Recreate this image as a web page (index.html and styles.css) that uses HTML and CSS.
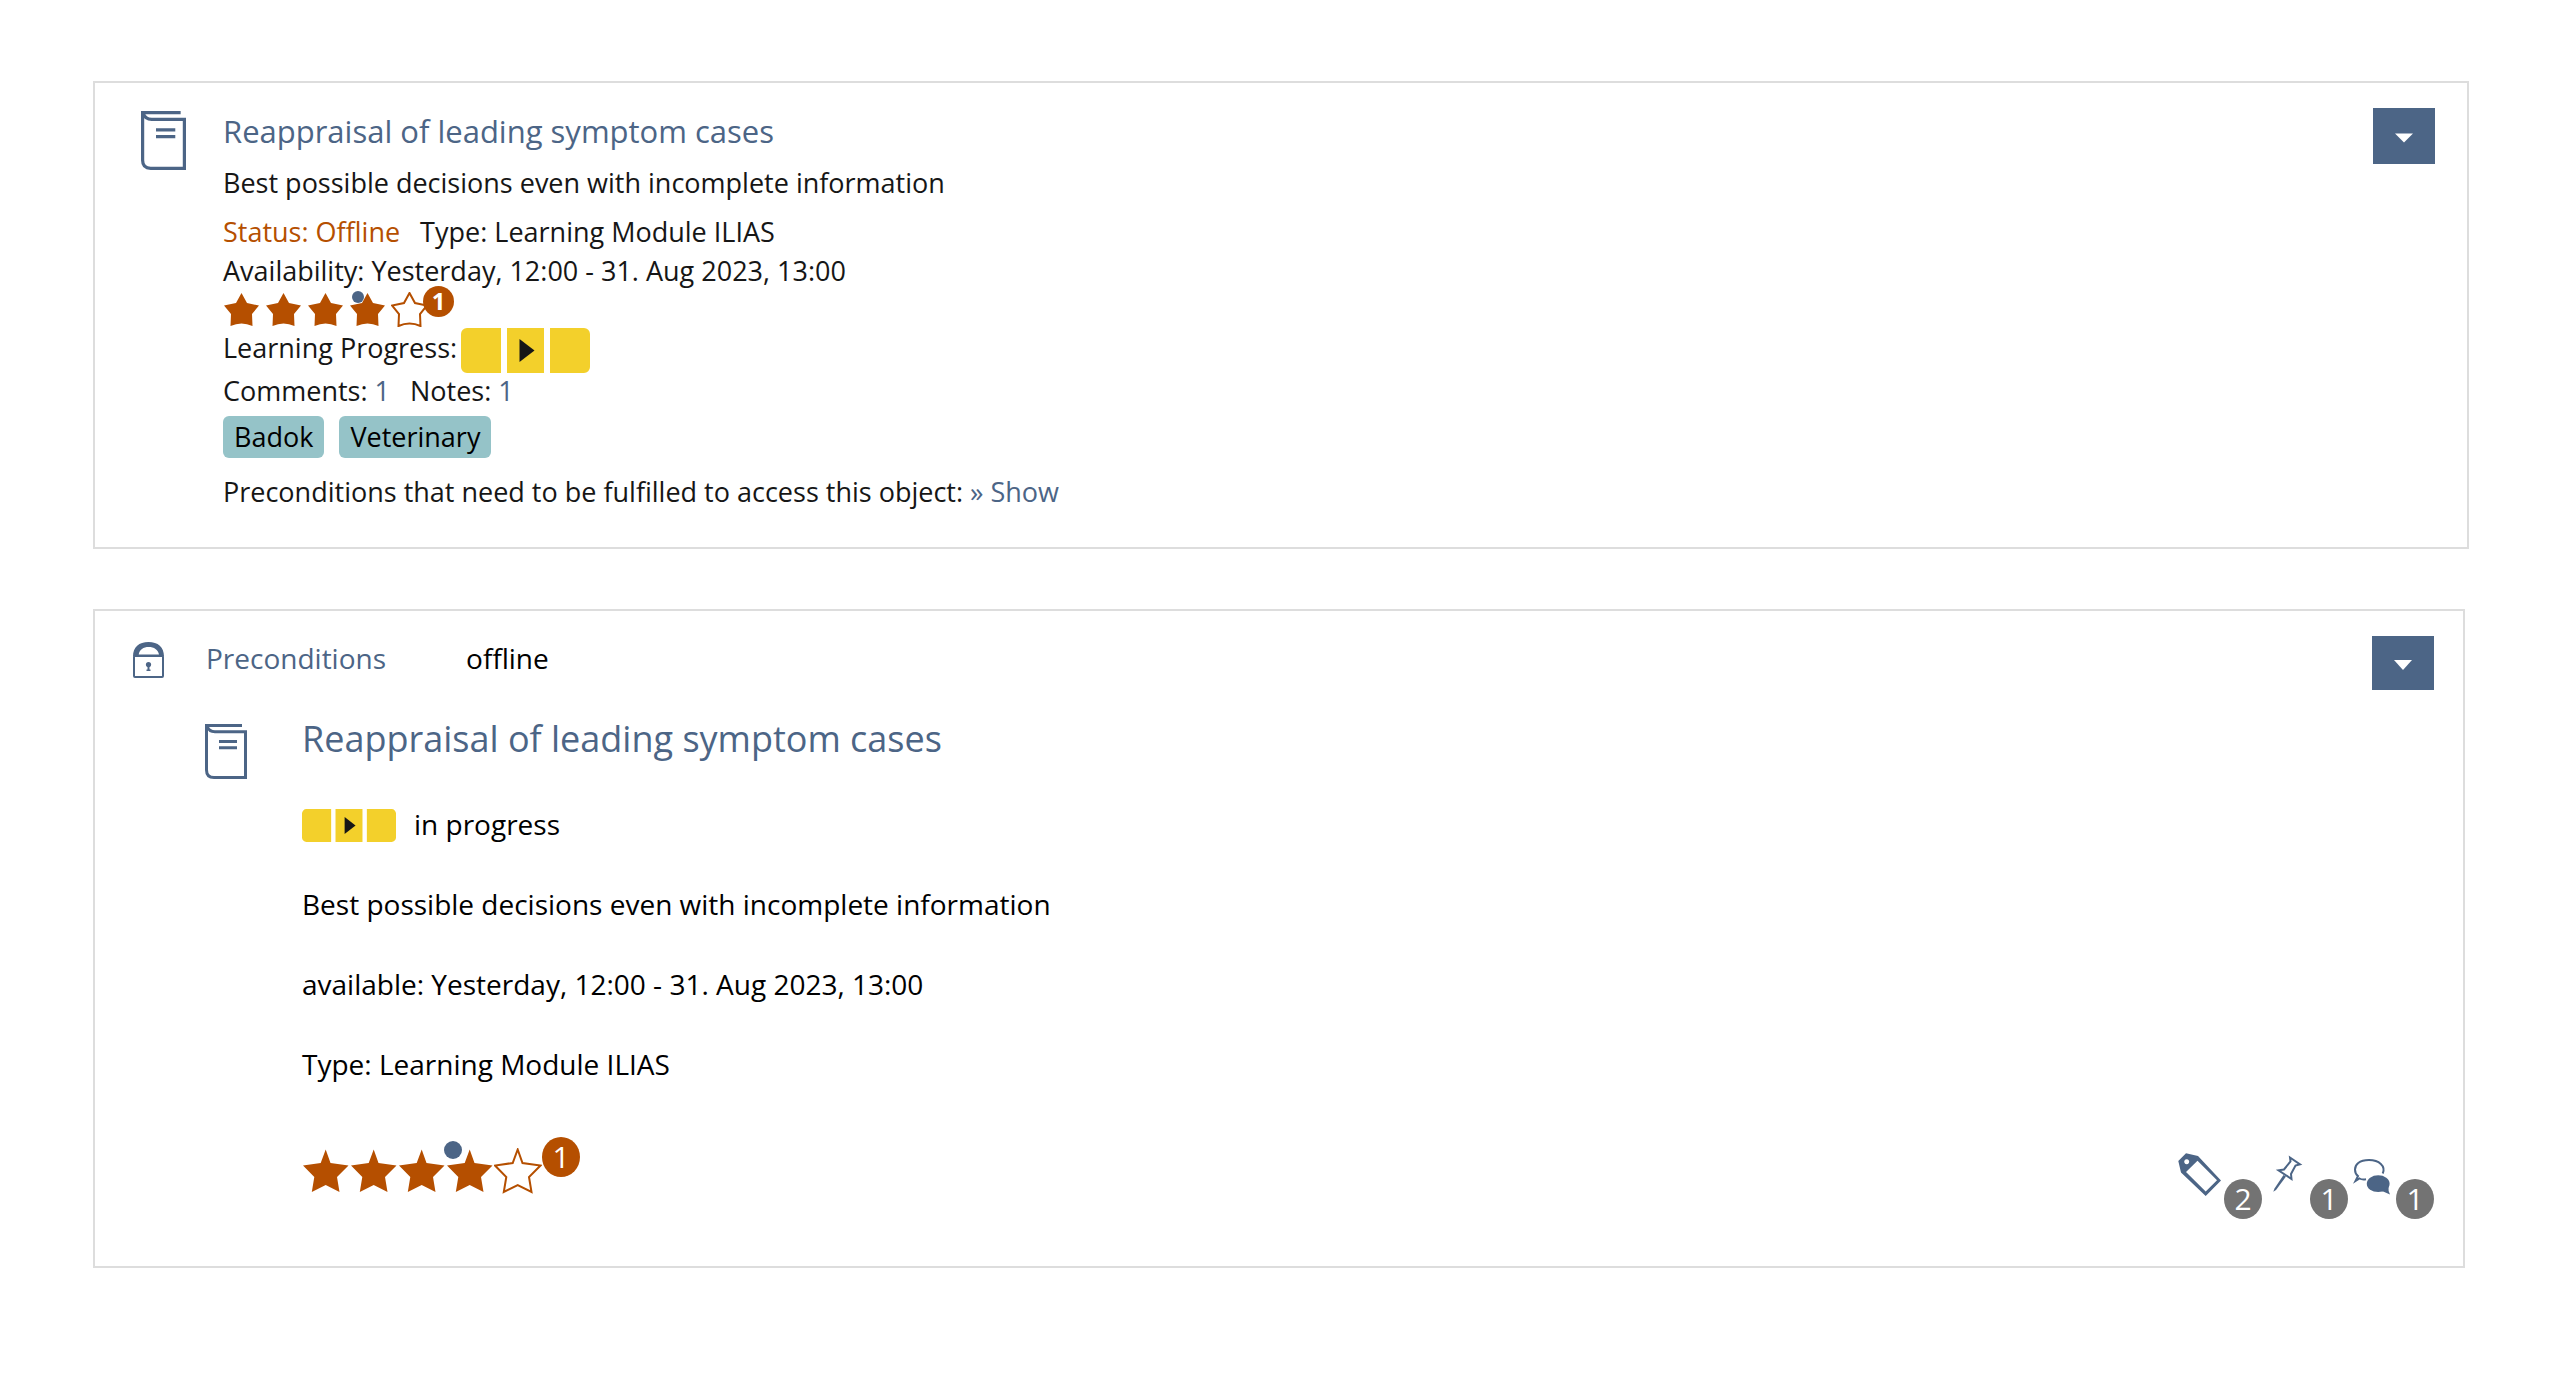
FILE: index.html
```
<!DOCTYPE html>
<html lang="en">
<head>
<meta charset="utf-8">
<title>Learning module items</title>
<link rel="stylesheet" href="styles.css">
</head>
<body>
<svg class="sprite" aria-hidden="true">
  <symbol id="book" viewBox="0 0 42 55">
    <path d="M37 1.5H1.5V46q0 7.500 7.500 7.500H40.500V7.700H10C5 7.700 3 5 2 2" fill="none" stroke="currentColor" stroke-width="3"/>
    <path d="M14 17.500H32M14 23.800H32" stroke="currentColor" stroke-width="3"/>
  </symbol>
  <symbol id="progress" viewBox="0 0 129 45">
    <path d="M6 0H40V45H6a6 6 0 0 1-6-6V6a6 6 0 0 1 6-6zM46 0H83V45H46zM89 0h34a6 6 0 0 1 6 6v33a6 6 0 0 1-6 6H89z" fill="#f3d02b"/>
    <path d="M58.500 11L73.500 22.500L58.500 34z" fill="#161616"/>
  </symbol>
  <symbol id="star-small" viewBox="-1 -1 37 35">
    <path d="M17.500 0L23 10L35 12.500L28 21L28.500 33Q17.500 28 6.500 33L7 21L0 12.500L12 10z"/>
  </symbol>
  <symbol id="star-large" viewBox="-1 -1 48 46">
    <path d="M22.700 0.500L27.500 14L45.500 16.500L34 28L36.500 43L22.700 36L8.800 43L11.300 28L0 16.500L17.700 14z"/>
  </symbol>
</svg>

<main class="page">
  <article class="card card--compact">
    <svg class="book book--large"><use href="#book"/></svg>
    <div class="card__main">
      <h2 class="title"><a href="#">Reappraisal of leading symptom cases</a></h2>
      <p class="description">Best possible decisions even with incomplete information</p>
      <p class="props"><span class="alert">Status: Offline</span><span>Type: Learning Module ILIAS</span></p>
      <p>Availability: Yesterday, 12:00 - 31. Aug 2023, 13:00</p>
      <div class="rating rating--small">
        <svg><use href="#star-small"/></svg>
        <svg><use href="#star-small"/></svg>
        <svg><use href="#star-small"/></svg>
        <svg><use href="#star-small"/></svg>
        <svg class="star--empty"><use href="#star-small"/></svg>
        <span class="rating__dot"></span>
        <span class="rating__count">1</span>
      </div>
      <div class="learning"><span>Learning Progress:</span><svg class="progress progress--large"><use href="#progress"/></svg></div>
      <p class="props"><span>Comments: <a href="#">1</a></span><span>Notes: <a href="#">1</a></span></p>
      <ul class="tags"><li>Badok</li><li>Veterinary</li></ul>
      <p>Preconditions that need to be fulfilled to access this object: <a href="#">» Show</a></p>
    </div>
    <button class="menu" type="button" aria-label="Actions"><svg viewBox="0 0 18 9"><path d="M0 0H18L9 9z"/></svg></button>
  </article>

  <article class="card card--detailed">
    <header class="bar">
      <svg class="lock" viewBox="0 0 31 36"><path d="M0 14.500C0 5 6 0 15.500 0S31 5 31 14.500zM5.700 12.500H26C25 7.500 21 5 15.700 5S6.500 7.500 5.700 12.500z" fill="currentColor" fill-rule="evenodd"/><rect x="1" y="14" width="29" height="21" rx="1" fill="none" stroke="currentColor" stroke-width="2"/><circle cx="15.500" cy="22.500" r="2.600" fill="currentColor"/><path d="M14.500 23H16.500V27.500H17.500V29H13.500V27.500H14.500z" fill="currentColor"/></svg>
      <a class="bar__link" href="#">Preconditions</a>
      <span class="bar__status">offline</span>
      <button class="menu menu--low" type="button" aria-label="Actions"><svg viewBox="0 0 18 10"><path d="M0 0H18L9 10z"/></svg></button>
    </header>
    <div class="details">
      <svg class="book"><use href="#book"/></svg>
      <div class="details__text">
        <h2 class="title"><a href="#">Reappraisal of leading symptom cases</a></h2>
        <p class="state"><svg class="progress"><use href="#progress"/></svg><span>in progress</span></p>
        <p>Best possible decisions even with incomplete information</p>
        <p>available: Yesterday, 12:00 - 31. Aug 2023, 13:00</p>
        <p>Type: Learning Module ILIAS</p>
      </div>
    </div>
    <footer class="foot">
      <div class="rating rating--large">
        <svg><use href="#star-large"/></svg>
        <svg><use href="#star-large"/></svg>
        <svg><use href="#star-large"/></svg>
        <svg><use href="#star-large"/></svg>
        <svg class="star--empty"><use href="#star-large"/></svg>
        <span class="rating__dot"></span>
        <span class="rating__count">1</span>
      </div>
      <div class="counters">
        <div class="counter">
          <svg viewBox="0 0 48 48"><path fill="currentColor" fill-rule="evenodd" d="M2.300 12L10 4.300L22 7L45 31.500L29.700 47L5 23.500zM21.500 11.700L10 23L29.700 42.500L41 31.300zM10.700 10.200a2.500 2.500 0 1 0 .01 0z"/></svg>
          <span class="count">2</span>
        </div>
        <div class="counter">
          <svg viewBox="0 0 48 48"><path d="M28 8.500L38 15.300L33.500 16.500L29 25L29.500 30L16.500 21.300L22 20.500L28.500 12.500z" fill="none" stroke="currentColor" stroke-width="2"/><path d="M21.500 26L24 27.500L14 41L11.300 42.700L12.500 39.500z" fill="currentColor"/></svg>
          <span class="count">1</span>
        </div>
        <div class="counter">
          <svg viewBox="0 0 48 48"><path d="M34.700 24.500C38 17 31 11 21 11S7 16 7 20.500C7 23.500 8 25.500 10 27L7.500 32L11.500 29.500Q14 31 18 30.300" fill="none" stroke="currentColor" stroke-width="2"/><ellipse cx="30.200" cy="34.700" rx="11.400" ry="8.400" fill="currentColor"/><path d="M40.500 37Q40 42 42 45.500L34 42z" fill="currentColor"/></svg>
          <span class="count">1</span>
        </div>
      </div>
    </footer>
  </article>
</main>
</body>
</html>
```
FILE: styles.css
```
* { box-sizing: border-box; }

body {
  margin: 0;
  background: #fff;
  color: #161616;
  font-family: "Open Sans", sans-serif;
}

h2, p, ul { margin: 0; padding: 0; font-weight: 400; }
a { color: #4c6586; text-decoration: none; }
svg { display: block; flex: none; }
.sprite { position: absolute; width: 0; height: 0; }

.page {
  display: flex;
  flex-direction: column;
  gap: 60px;
  padding: 81px 95px 60px 93px;
}

.card { border: 2px solid #ddd; }

.book { width: 42px; height: 55px; color: #4c6586; }
.book--large { width: 45px; height: 59px; margin-top: 3px; }

.progress { width: 94px; height: 33px; }
.progress--large { width: 129px; height: 45px; }

.menu {
  display: flex;
  align-items: center;
  justify-content: center;
  width: 62px;
  height: 56px;
  padding: 0;
  border: 0;
  background: #4c6586;
}
.menu svg { width: 18px; height: 10px; fill: #fff; margin-top: 4px; }
.menu--low { height: 54px; }

/* compact card */
.card--compact {
  display: grid;
  grid-template-columns: 82px 1fr auto;
  align-items: start;
  padding: 25px 32px 36px 46px;
  font-size: 27px;
  line-height: 39px;
}
.card--compact .title { font-size: 31px; line-height: 46px; }
.description { margin: 9px 0 10px; }
.props { display: flex; gap: 20px; }
.alert { color: #b54f00; }
.learning { display: flex; gap: 4px; height: 43px; }
.tags { display: flex; gap: 15px; margin: 6px 0 14px; list-style: none; }
.tags li {
  padding: 0 11px;
  border-radius: 6px;
  background: #95c3c8;
  color: #000;
  line-height: 42px;
}

/* ratings */
.rating { position: relative; display: flex; fill: #b54f00; }
.star--empty { fill: #fff; stroke: #b54f00; stroke-width: 2px; }
.rating__dot { position: absolute; border-radius: 50%; background: #4c6586; }
.rating__count { border-radius: 50%; background: #b54f00; color: #fff; text-align: center; }

.rating--small { gap: 5px; height: 38px; padding-top: 2px; }
.rating--small svg { width: 37px; height: 35px; }
.rating--small .rating__dot { left: 129px; top: 1px; width: 12px; height: 12px; }
.rating--small .rating__count {
  width: 31px;
  height: 31px;
  margin: -6px 0 0 -10px;
  z-index: 1;
  font-size: 24px;
  font-weight: 700;
  line-height: 30px;
}

.rating--large { padding-top: 11px; }
.rating--large svg { width: 48px; height: 46px; }
.rating--large .rating__dot { left: 142px; top: 4px; width: 18px; height: 18px; }
.rating--large .rating__count {
  width: 38px;
  height: 40px;
  margin-top: -11px;
  font-size: 30px;
  line-height: 39px;
}

/* detailed card */
.card--detailed {
  margin-right: 4px;
  padding: 25px 29px 47px 38px;
  color: #000;
  font-size: 28px;
  line-height: 40px;
}
.bar { display: flex; align-items: flex-start; }
.lock { width: 31px; height: 36px; margin-top: 6px; color: #4c6586; }
.bar__link { margin: 2px 0 0 42px; }
.bar__status { margin: 2px auto 0 80px; }

.details { display: flex; padding: 24px 0 0 72px; }
.details .book { margin-top: 10px; }
.details__text { display: flex; flex-direction: column; gap: 40px; margin-left: 55px; }
.details .title { font-size: 36px; line-height: 50px; }
.state { display: flex; gap: 18px; }
.state .progress { margin-top: 5px; }

.foot { display: flex; justify-content: space-between; padding: 53px 0 0 169px; }
.counters { display: flex; padding-top: 12px; color: #4c6586; }
.counter { display: flex; align-items: flex-end; height: 70px; }
.counter svg { width: 48px; height: 48px; align-self: flex-start; }
.count {
  width: 38px;
  height: 40px;
  border-radius: 50%;
  background: #737373;
  color: #fff;
  font-size: 30px;
  line-height: 39px;
  text-align: center;
}
```
